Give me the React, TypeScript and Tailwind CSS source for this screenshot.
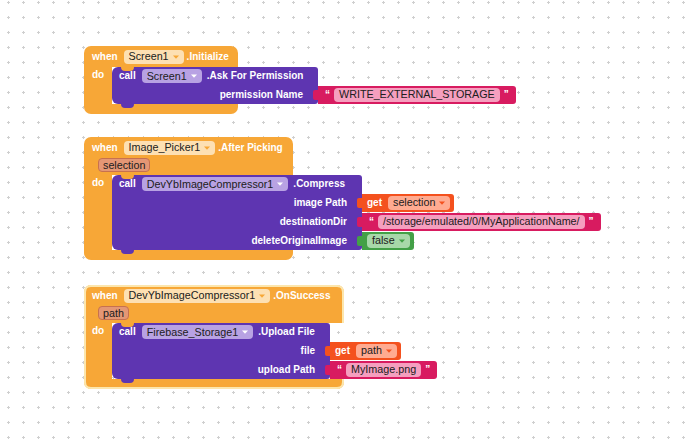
import type { ReactNode } from 'react';

type Tone = 'event' | 'method' | 'get' | 'text' | 'logic';

const fieldBg: Record<Tone, string> = {
  event: 'bg-[#fde0b3]',
  method: 'bg-[#b8a2e3]',
  get: 'bg-[#ffab91]',
  text: 'bg-[#f59fbf]',
  logic: 'bg-[#a8d8a9]',
};

const arrowFill: Record<Tone, string> = {
  event: 'fill-[#f7a737]',
  method: 'fill-white',
  get: 'fill-[#f4511e]',
  text: 'fill-white',
  logic: 'fill-[#43a047]',
};

const ring =
  'shadow-[inset_2px_0_0_#fce6ad,inset_-2px_0_0_#fce6ad,inset_0_2px_0_#fce6ad]';
const ringArm = 'shadow-[inset_2px_0_0_#fce6ad]';
const ringFoot =
  'shadow-[inset_2px_0_0_#fce6ad,inset_-2px_0_0_#fce6ad,inset_0_-2px_0_#fce6ad]';

const Label = ({ children, className = '' }: { children: ReactNode; className?: string }) => (
  <span className={`whitespace-nowrap text-[10px] font-bold leading-none text-white ${className}`}>
    {children}
  </span>
);

const Field = ({ label, tone, dropdown = true }: { label: string; tone: Tone; dropdown?: boolean }) => (
  <span
    className={`inline-flex h-[14px] shrink-0 items-center gap-[4px] whitespace-nowrap rounded-[4px] px-[5px] text-[10.75px] leading-none text-[#202020] ${fieldBg[tone]}`}
  >
    <span>{label}</span>
    {dropdown && (
      <svg width="6" height="4" viewBox="0 0 6 4" className={arrowFill[tone]}>
        <path d="M0 0.4h6L3 3.8z" />
      </svg>
    )}
  </span>
);

const Param = ({ name }: { name: string }) => (
  <span className="inline-flex h-[14px] items-center rounded-[4px] border border-[#c7714f] bg-[#e49775] px-[4px] text-[10.75px] leading-none text-[#202020]">
    {name}
  </span>
);

const Quote = ({ open }: { open?: boolean }) => (
  <span className="text-[10px] font-bold leading-none text-white">{open ? '\u201C' : '\u201D'}</span>
);

// socket block plugged into a method input
const Plug = ({ color, body, children }: { color: string; body: string; children: ReactNode }) => (
  <div className="-ml-[5px] flex items-center">
    <div className={`h-[10px] w-[5px] rounded-l-[2px] ${color}`} />
    <div className={`flex h-[18px] items-center rounded-r-[3px] ${color} ${body}`}>{children}</div>
  </div>
);

const TextPlug = ({ value }: { value: string }) => (
  <Plug color="bg-[#d81b60]" body="gap-[4px] pl-[7px] pr-[7px]">
    <Quote open />
    <Field label={value} tone="text" dropdown={false} />
    <Quote />
  </Plug>
);

const GetPlug = ({ name }: { name: string }) => (
  <Plug color="bg-[#f4511e]" body="gap-[6px] pl-[5px] pr-[4px]">
    <Label>get</Label>
    <Field label={name} tone="get" />
  </Plug>
);

const LogicPlug = ({ value }: { value: string }) => (
  <Plug color="bg-[#43a047]" body="pl-[5px] pr-[4px]">
    <Field label={value} tone="logic" />
  </Plug>
);

type Row = { label: string; plug: ReactNode };

const MethodBlock = ({
  width,
  component,
  method,
  rows,
}: {
  width: string;
  component: string;
  method: string;
  rows: Row[];
}) => (
  <div className="relative flex flex-col">
    <div className={`flex h-[18px] items-center rounded-tl-[6px] rounded-tr-[3px] bg-[#5e35b1] pl-[7px] ${width}`}>
      <Label>call</Label>
      <span className="ml-[6px] flex">
        <Field label={component} tone="method" />
      </span>
      <Label className="ml-[5px]">{method}</Label>
    </div>
    {rows.map((row, i) => (
      <div key={row.label} className="flex items-center">
        <div
          className={`flex h-[19px] items-center justify-end bg-[#5e35b1] pr-[15px] ${width} ${
            i === rows.length - 1 ? 'rounded-bl-[6px] rounded-br-[3px]' : ''
          }`}
        >
          <Label>{row.label}</Label>
        </div>
        {row.plug}
      </div>
    ))}
    {/* statement notch / bump */}
    <div className="absolute left-[9px] top-0 h-[4px] w-[13px] rounded-b-[4px] bg-[#f7a737]" />
    <div className="absolute -bottom-[4px] left-[9px] h-[4px] w-[13px] rounded-b-[4px] bg-[#5e35b1]" />
  </div>
);

const EventBlock = ({
  pos,
  width,
  component,
  event,
  param,
  selected,
  children,
}: {
  pos: string;
  width: string;
  component: string;
  event: string;
  param?: string;
  selected?: boolean;
  children: ReactNode;
}) => (
  <div className={`absolute flex flex-col items-start ${pos}`}>
    <div className={`flex flex-col rounded-t-[7px] bg-[#f7a737] pl-[8px] ${width} ${selected ? ring : ''}`}>
      <div className="flex h-[21px] items-center">
        <Label>when</Label>
        <span className="ml-[6px] flex">
          <Field label={component} tone="event" />
        </span>
        <Label className="ml-[3px]">{event}</Label>
      </div>
      {param && (
        <div className="flex h-[17px] items-start pl-[6px]">
          <Param name={param} />
        </div>
      )}
    </div>
    <div className="flex">
      <div className={`w-[28px] bg-[#f7a737] pl-[8px] ${selected ? ringArm : ''}`}>
        <div className="flex h-[16px] items-center">
          <Label>do</Label>
        </div>
      </div>
      {children}
    </div>
    <div className={`h-[10px] rounded-b-[7px] bg-[#f7a737] ${width} ${selected ? ringFoot : ''}`} />
  </div>
);

export default function App() {
  return (
    <div className="relative h-[440px] w-[690px] overflow-hidden bg-white font-['Liberation_Sans',Arial,sans-serif]">
      {/* workspace grid */}
      <svg className="absolute inset-0" width="690" height="440">
        <defs>
          <pattern id="grid" width="15" height="15" patternUnits="userSpaceOnUse">
            <rect x="7" y="2" width="3" height="1" fill="#cfcfcf" />
            <rect x="8" y="1" width="1" height="3" fill="#cfcfcf" />
          </pattern>
        </defs>
        <rect width="690" height="440" fill="url(#grid)" />
      </svg>

      <EventBlock pos="left-[84px] top-[46px]" width="w-[154px]" component="Screen1" event=".Initialize">
        <MethodBlock
          width="w-[206px]"
          component="Screen1"
          method=".Ask For Permission"
          rows={[{ label: 'permission Name', plug: <TextPlug value="WRITE_EXTERNAL_STORAGE" /> }]}
        />
      </EventBlock>

      <EventBlock
        pos="left-[84px] top-[137px]"
        width="w-[209px]"
        component="Image_Picker1"
        event=".After Picking"
        param="selection"
      >
        <MethodBlock
          width="w-[250px]"
          component="DevYbImageCompressor1"
          method=".Compress"
          rows={[
            { label: 'image Path', plug: <GetPlug name="selection" /> },
            { label: 'destinationDir', plug: <TextPlug value="/storage/emulated/0/MyApplicationName/" /> },
            { label: 'deleteOriginalImage', plug: <LogicPlug value="false" /> },
          ]}
        />
      </EventBlock>

      <EventBlock
        pos="left-[84px] top-[285px]"
        width="w-[260px]"
        component="DevYbImageCompressor1"
        event=".OnSuccess"
        param="path"
        selected
      >
        <MethodBlock
          width="w-[218px]"
          component="Firebase_Storage1"
          method=".Upload File"
          rows={[
            { label: 'file', plug: <GetPlug name="path" /> },
            { label: 'upload Path', plug: <TextPlug value="MyImage.png" /> },
          ]}
        />
      </EventBlock>
    </div>
  );
}
